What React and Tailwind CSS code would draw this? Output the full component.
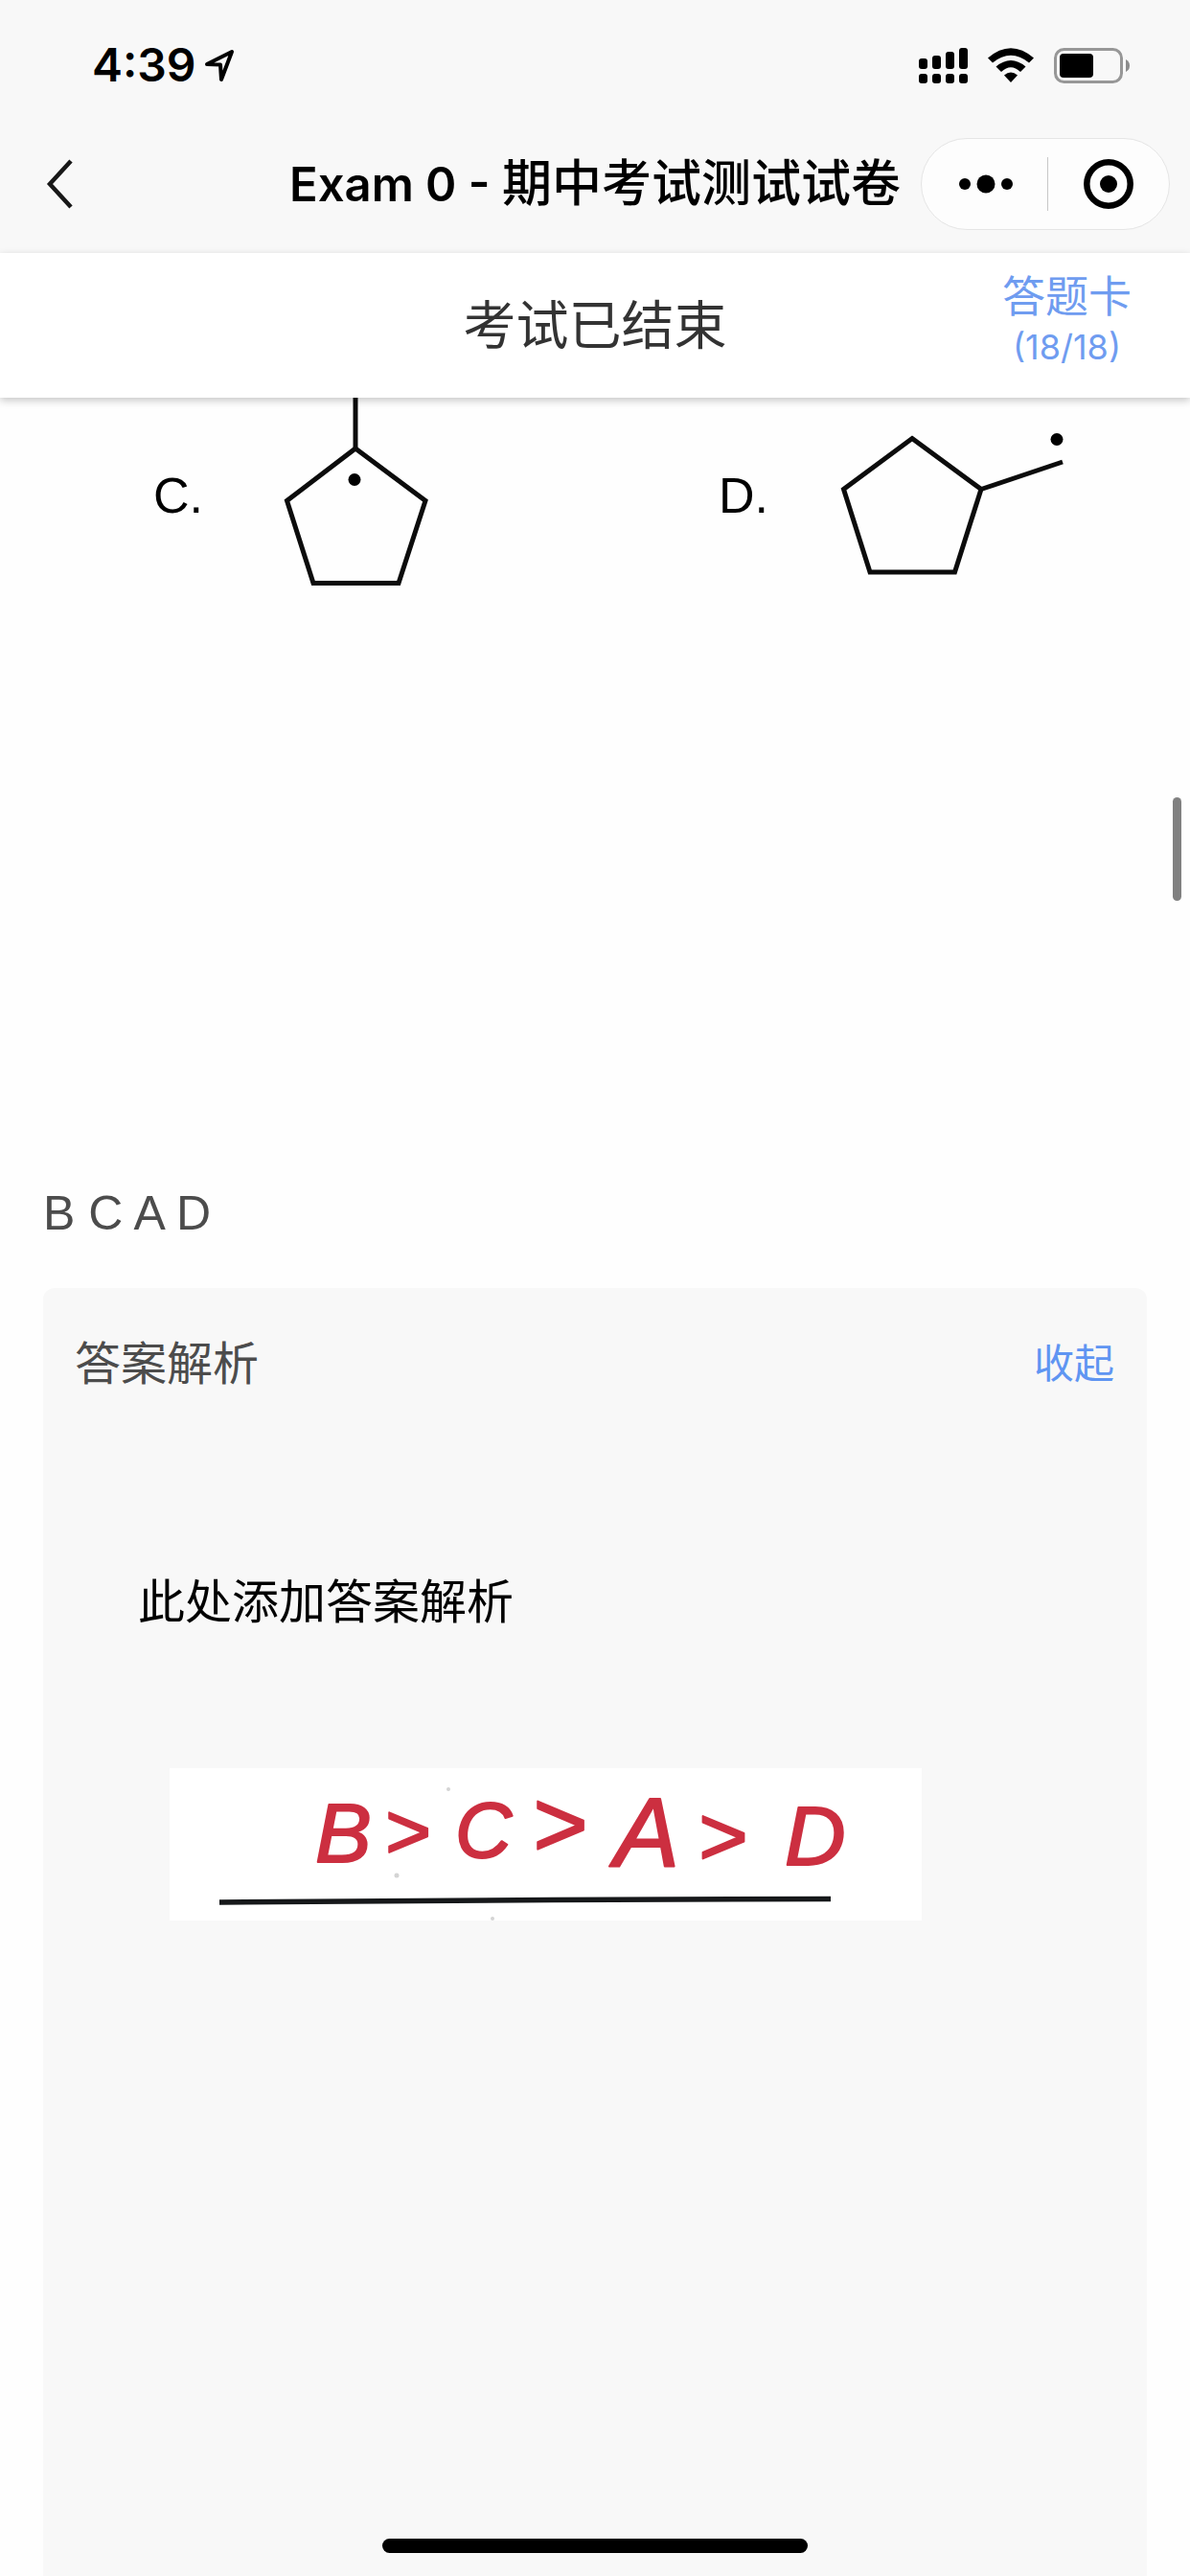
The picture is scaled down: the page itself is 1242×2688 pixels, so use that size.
function LocationArrow() {
  return (
    <svg className="h-9 w-8" viewBox="0 0 32 36" fill="none" stroke="#000" strokeWidth="4" strokeLinejoin="round" aria-hidden="true">
      <path d="M3 17 L29 4 L18 33 L17 17.500 Z" />
    </svg>
  );
}

function SignalBars() {
  const tops = [11, 8, 4, 0];
  return (
    <svg className="h-[37px] w-[51px]" viewBox="0 0 51 37" aria-label="信号" role="img">
      {tops.map((top, i) => (
        <g key={i}>
          <rect x={i * 14} y={top} width="9" height={22 - top} rx="3" />
          <rect x={i * 14} y="27" width="9" height="10" rx="3" />
        </g>
      ))}
    </svg>
  );
}

function Wifi() {
  return (
    <svg className="h-[37px] w-12" viewBox="0 0 48 37" aria-label="Wi-Fi" role="img">
      <path d="M0 10.500 Q24 -10 48 10.500 L43 15.500 Q24 0 5 15.500 Z" />
      <path d="M8.500 19.500 Q24 6.500 39.500 19.500 L34 25 Q24 15.500 14 25 Z" />
      <path d="M17 28.500 Q24 22.500 31 28.500 L24 36 Z" />
    </svg>
  );
}

function Battery() {
  return (
    <svg className="h-[37px] w-20" viewBox="0 0 80 37" aria-label="电量" role="img">
      <rect x="1.500" y="1.500" width="69" height="34" rx="9" fill="none" stroke="#979797" strokeWidth="3" />
      <rect x="6" y="6" width="35" height="25" rx="4" />
      <path d="M75 12 Q79 14 79 18.500 Q79 23 75 25 Z" fill="#8c8c8c" />
    </svg>
  );
}

function StatusBar() {
  return (
    <div className="flex h-[120px] items-center justify-between pt-4 pr-[62px] pl-24">
      <div className="flex items-center gap-2">
        <span className="text-[48px] leading-none font-semibold">4:39</span>
        <LocationArrow />
      </div>
      <div className="flex items-center gap-[21px]">
        <SignalBars />
        <Wifi />
        <Battery />
      </div>
    </div>
  );
}

function NavBar() {
  return (
    <div className="grid h-36 grid-cols-[1fr_auto_1fr] items-center">
      <button type="button" aria-label="返回" className="ml-12 justify-self-start">
        <svg className="h-[52px] w-[30px]" viewBox="0 0 30 52" fill="none" stroke="#181818" strokeWidth="4.500">
          <path d="M26 2 L4 26 L26 50" />
        </svg>
      </button>
      <h1 className="text-[49px] leading-none font-semibold whitespace-nowrap">
        Exam 0 - <span className="text-[52px] font-medium">期中考试测试试卷</span>
      </h1>
      <div className="mr-[21px] flex h-24 w-[260px] items-center justify-self-end rounded-full border border-[#e5e5e5] bg-[#fdfdfd]">
        <button type="button" aria-label="更多" className="flex flex-1 justify-center pl-1">
          <svg className="h-5 w-[58px]" viewBox="0 0 58 20">
            <circle cx="7" cy="10" r="6" />
            <circle cx="29" cy="10" r="9.500" />
            <circle cx="51" cy="10" r="6" />
          </svg>
        </button>
        <span className="h-14 w-px bg-[#c8c8c8]" />
        <button type="button" aria-label="关闭" className="flex flex-1 justify-center">
          <svg className="h-[52px] w-[52px]" viewBox="0 0 52 52">
            <circle cx="26" cy="26" r="22.700" fill="none" stroke="#000" strokeWidth="6.500" />
            <circle cx="26" cy="26" r="9" />
          </svg>
        </button>
      </div>
    </div>
  );
}

function ExamBar() {
  return (
    <div className="relative z-10 grid h-[151px] grid-cols-[1fr_auto_1fr] items-center bg-white shadow-[0_3px_8px_rgba(0,0,0,0.22)]">
      <p className="col-start-2 text-[55px] leading-none text-[#333]">考试已结束</p>
      <button type="button" className="mr-[61px] flex flex-col items-center justify-self-end pb-3 text-[#6f9cf0]">
        <span className="text-[45px] leading-[56px]">答题卡</span>
        <span className="text-[36px] leading-[48px]">(18/18)</span>
      </button>
    </div>
  );
}

function Choices() {
  return (
    <div className='grid h-[780px] grid-cols-2 items-start font-["Liberation_Sans",sans-serif] text-[52px] text-black'>
      <div className="flex items-center pl-40">
        <span className="w-[135px] pt-1 leading-none">C.</span>
        <svg className="h-[200px] w-[155px]" viewBox="0 0 155 200" fill="none" stroke="#0c0c0c" strokeWidth="5" role="img" aria-label="1-甲基环戊基自由基">
          <path d="M76 0 V53" />
          <path d="M76 53 L149 107.500 L121 193.500 H32 L4.500 107.500 Z" />
          <circle cx="75" cy="85.500" r="6.500" fill="#000" stroke="none" />
        </svg>
      </div>
      <div className="flex items-center pl-[129px]">
        <span className="w-[126px] pt-1 leading-none">D.</span>
        <svg className="h-[200px] w-[240px]" viewBox="0 0 240 200" fill="none" stroke="#0c0c0c" strokeWidth="5" role="img" aria-label="环戊基甲基自由基">
          <path d="M76 42.500 L148 95.500 L120.500 182 H32 L4.500 95.500 Z" />
          <path d="M148 95.500 L233 67" />
          <circle cx="227" cy="43.500" r="6.500" fill="#000" stroke="none" />
        </svg>
      </div>
    </div>
  );
}

const HANDWRITING = [
  { ch: "B", x: 152, y: 98, size: 88 },
  { ch: ">", x: 224, y: 94, size: 82 },
  { ch: "C", x: 298, y: 93, size: 82 },
  { ch: ">", x: 378, y: 92, size: 98 },
  { ch: "A", x: 464, y: 103, size: 102 },
  { ch: ">", x: 551, y: 101, size: 88 },
  { ch: "D", x: 642, y: 101, size: 88 },
];

function HandwrittenAnswer() {
  return (
    <svg className="mt-[143px] ml-[132px] h-[159px] w-[785px] bg-white" viewBox="0 0 785 159">
      <g fill="#cc2f40" stroke="#cc2f40" strokeWidth="2" strokeLinejoin="round" fontFamily='"Liberation Sans", sans-serif' fontStyle="italic">
        {HANDWRITING.map((h, i) => (
          <text key={i} x={h.x} y={h.y} fontSize={h.size}>{h.ch}</text>
        ))}
      </g>
      <path d="M52 140 L400 137.500 L690 136.500" fill="none" stroke="#16181a" strokeWidth="5.500" />
      <g fill="#d4d4d4">
        <circle cx="291" cy="22" r="2" />
        <circle cx="237" cy="112" r="2.500" />
        <circle cx="337" cy="157" r="2" />
      </g>
    </svg>
  );
}

function Analysis() {
  return (
    <section className="mx-[45px] flex-1 rounded-t-xl bg-[#f8f8f8]">
      <div className="flex h-[158px] items-center justify-between pr-[34px] pl-[33px]">
        <h2 className="text-[48px] leading-none text-[#4c4c4c]">答案解析</h2>
        <button type="button" className="text-[42px] leading-none text-[#5f95f2]">收起</button>
      </div>
      <p className="mt-[140px] ml-[99px] text-[49px] leading-[60px] text-black">此处添加答案解析</p>
      <HandwrittenAnswer />
    </section>
  );
}

export default function App() {
  return (
    <div className='relative flex min-h-screen flex-col overflow-hidden bg-[#fefefe] font-[Inter,"Noto_Sans_CJK_SC",sans-serif] text-black'>
      <header className="bg-[#f8f8f8]">
        <StatusBar />
        <NavBar />
      </header>
      <ExamBar />
      <main className="flex flex-1 flex-col">
        <Choices />
        <p className='mb-[42px] ml-[45px] h-[107px] pt-[41px] font-["Liberation_Sans",sans-serif] text-[50px] leading-[60px] text-[#4c4c4c]'>B C A D</p>
        <Analysis />
      </main>
      <div className="absolute top-[832px] right-[9px] h-[108px] w-[9px] rounded-full bg-[#808080]" />
      <div className="absolute bottom-6 left-1/2 h-[15px] w-[444px] -translate-x-1/2 rounded-full bg-black" />
    </div>
  );
}
